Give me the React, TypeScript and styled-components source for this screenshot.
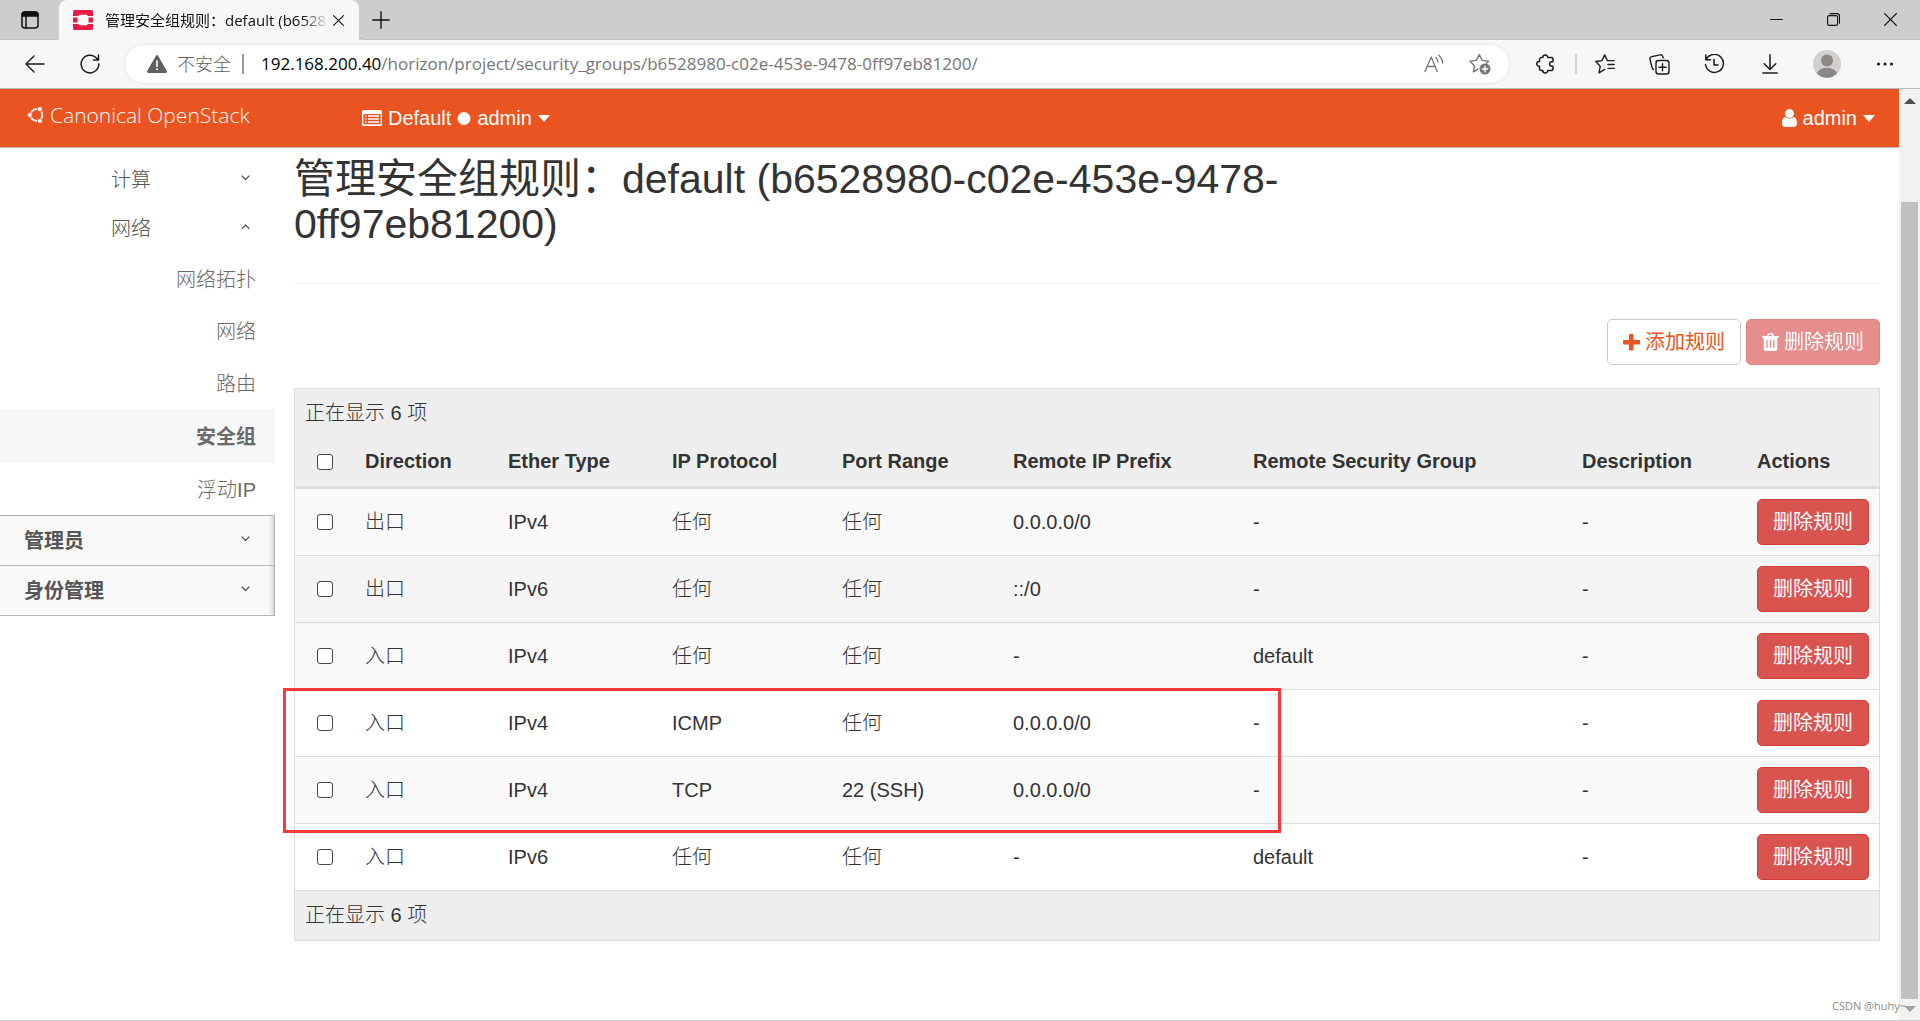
import React from "react";
import styled, { createGlobalStyle } from "styled-components";

const UI_FONT = '"Open Sans", "Noto Sans", "Noto Sans CJK SC", sans-serif';
const PAGE_FONT = '"Liberation Sans", Arial, "Noto Sans CJK SC", sans-serif';

const GlobalStyle = createGlobalStyle`
  *, *::before, *::after { box-sizing: border-box; }
  body { margin: 0; background: #fff; color: #333; font-family: ${PAGE_FONT}; }
  button { font: inherit; color: inherit; background: none; border: 0; padding: 0; margin: 0; cursor: pointer; }
  a { color: inherit; text-decoration: none; }
  ul { list-style: none; margin: 0; padding: 0; }
  svg { display: block; flex: none; }
`;

/* ---------- browser frame ---------- */

const Browser = styled.div`
  display: flex;
  flex-direction: column;
  min-height: 100vh;
  border-bottom: 1px solid #ccc8d0;
`;

const TabStrip = styled.div`
  display: flex;
  height: 40px;
  background: #cdcdcd;
  font-family: ${UI_FONT};
  color: #111;
`;

const TabMenuButton = styled.button`
  display: flex;
  align-items: center;
  justify-content: center;
  width: 59px;
  border-bottom: 1px solid #bfbfbf;
  border-bottom-right-radius: 6px;
`;

const Tab = styled.div`
  display: flex;
  align-items: center;
  width: 300px;
  padding: 0 15px 0 14px;
  background: #f7f7f7;
  border-radius: 8px 8px 0 0;
`;

const TabTitle = styled.span`
  flex: 1;
  min-width: 0;
  margin: 0 4px 0 12px;
  white-space: nowrap;
  font-size: 15px;
  line-height: 24px;
  mask-image: linear-gradient(to right, #000 88%, transparent);
`;

const StripRest = styled.div`
  display: flex;
  flex: 1;
  justify-content: space-between;
  border-bottom: 1px solid #bfbfbf;
  border-bottom-left-radius: 6px;
`;

const StripButton = styled.button`
  display: flex;
  align-items: center;
  justify-content: center;
  width: 43px;
`;

const WindowControls = styled.div`
  display: flex;
  padding-right: 1px;
`;

const WindowButton = styled.button`
  display: flex;
  align-items: center;
  justify-content: center;
  width: 57px;
`;

const Toolbar = styled.div`
  display: flex;
  align-items: center;
  height: 49px;
  padding: 0 8px 0 7px;
  background: #f7f7f7;
  border-bottom: 1px solid #b9b9b9;
  font-family: ${UI_FONT};
`;

const ToolButton = styled.button<{ $wide?: boolean }>`
  display: flex;
  align-items: center;
  justify-content: center;
  width: ${(p) => (p.$wide ? 60 : 55)}px;
  height: 40px;
  color: #1b1b1b;
`;

const AddressBar = styled.div`
  display: flex;
  flex: 1;
  align-items: center;
  min-width: 0;
  height: 38px;
  margin: 0 6px 0 8px;
  padding: 0 18px 0 22px;
  background: #fff;
  border-radius: 19px;
  box-shadow: 0 0 3px rgba(0, 0, 0, 0.12);
  color: #767676;
`;

const Insecure = styled.span`
  margin-left: 10px;
  font-size: 18px;
  line-height: 24px;
  font-weight: 300;
  color: #5f5f5f;
`;

const Divider = styled.span<{ $light?: boolean }>`
  width: 2px;
  height: 20px;
  background: ${(p) => (p.$light ? "#d0d0d0" : "#9a9a9a")};
`;

const Url = styled.div`
  flex: 1;
  min-width: 0;
  overflow: hidden;
  white-space: nowrap;
  font-size: 17px;
  line-height: 24px;
  b { font-weight: 400; color: #000; }
`;

const AddressTools = styled.div`
  display: flex;
  gap: 25px;
`;

const Spacer = styled.span<{ $w: number }>`
  width: ${(p) => p.$w}px;
`;

/* ---------- viewport ---------- */

const Viewport = styled.div`
  display: flex;
  flex: 1;
`;

const Page = styled.div`
  flex: 1;
  min-width: 0;
`;

const ScrollTrack = styled.div`
  display: flex;
  flex-direction: column;
  align-items: center;
  justify-content: space-between;
  width: 21px;
  padding: 9px 0 8px;
  background: #f1f1f1;
`;

const ScrollThumb = styled.div`
  flex: 1;
  width: 17px;
  margin: 98px 0 7px;
  background: #c1c1c1;
`;

const ScrollArrow = styled.span<{ $down?: boolean }>`
  border: 6px solid transparent;
  ${(p) =>
    p.$down
      ? "border-top-color: #a0a0a0; border-bottom-width: 0;"
      : "border-bottom-color: #505050; border-top-width: 0;"}
`;

const TopNav = styled.header`
  display: flex;
  align-items: center;
  height: 59px;
  padding: 0 24px 0 27px;
  background: #e95420;
  border-bottom: 1px solid #c9bdb8;
  color: #fff;
  font-size: 20px;
  line-height: 28px;
`;

const Brand = styled.a`
  display: flex;
  align-items: center;
  gap: 5px;
  width: 335px;
  padding-bottom: 6px;
  font-family: "Open Sans", sans-serif;
  font-weight: 300;
  font-size: 21px;
`;

const NavMenu = styled.button`
  display: flex;
  align-items: center;
  gap: 6px;
`;

const NavGap = styled.div`
  flex: 1;
`;

const Caret = styled.span`
  border: 6px solid transparent;
  border-top: 7px solid #fff;
  border-bottom-width: 0;
`;

const Columns = styled.div`
  display: flex;
  align-items: flex-start;
`;

/* ---------- sidebar ---------- */

const Sidebar = styled.nav`
  width: 275px;
  padding-top: 7px;
  font-size: 20px;
  line-height: 28px;
`;

const GroupButton = styled.button`
  display: flex;
  align-items: center;
  justify-content: space-between;
  width: 100%;
  height: 49px;
  padding: 0 25px 0 111px;
  font-weight: 300;
  color: #555;
`;

const SubLink = styled.a<{ $active?: boolean }>`
  display: flex;
  align-items: center;
  justify-content: flex-end;
  height: ${(p) => (p.$active ? 54 : 52)}px;
  padding: 2px 19px 0 0;
  color: #6a6a6a;
  background: ${(p) => (p.$active ? "#f7f7f7" : "transparent")};
  font-weight: ${(p) => (p.$active ? 700 : 300)};
`;

const Panels = styled.div`
  border-bottom: 1px solid #b5b5b5;
`;

const PanelButton = styled.button`
  display: flex;
  align-items: center;
  justify-content: space-between;
  width: 100%;
  height: 50px;
  padding: 0 24px;
  background: #f9f9f9;
  border-top: 1px solid #b5b5b5;
  border-right: 1px solid #b5b5b5;
  box-shadow: inset -6px 0 5px -4px rgba(0, 0, 0, 0.16);
  font-weight: 700;
  color: #555;
`;

/* ---------- main content ---------- */

const Main = styled.main`
  flex: 1;
  min-width: 0;
  padding: 9px 19px 40px;
`;

const Heading = styled.h1`
  max-width: 70%;
  margin: 0;
  font-size: 41px;
  line-height: 45px;
  font-weight: 400;
`;

const Rule = styled.hr`
  height: 1px;
  margin: 36px 0 35px;
  border: 0;
  background: #eee;
`;

const Actions = styled.div`
  display: flex;
  justify-content: flex-end;
  gap: 5px;
  margin-bottom: 23px;
`;

const Button = styled.button<{ $kind: "plain" | "danger" }>`
  display: inline-flex;
  align-items: center;
  gap: 5px;
  height: 46px;
  padding: 0 15px;
  border: 1px solid ${(p) => (p.$kind === "danger" ? "#d43f3a" : "#ccc")};
  border-radius: 5px;
  background: ${(p) => (p.$kind === "danger" ? "#d9534f" : "#fff")};
  color: ${(p) => (p.$kind === "danger" ? "#fff" : "#e95420")};
  font-size: 20px;
  line-height: 28px;
  font-weight: 400;
  white-space: nowrap;
  vertical-align: middle;
  &:disabled { opacity: 0.65; cursor: default; }
`;

const TableArea = styled.div`
  position: relative;
`;

const RuleTable = styled.table`
  width: 100%;
  table-layout: fixed;
  border: 1px solid #ddd;
  border-spacing: 0;
  font-size: 20px;
  line-height: 29px;
  font-weight: 300;
  text-align: left;
`;

const SummaryCell = styled.td`
  padding: 10px;
  background: #eee;
  tfoot & { border-top: 1px solid #ddd; }
`;

const HeadCell = styled.th<{ $center?: boolean }>`
  padding: 9px 10px 10px;
  background: #eee;
  border-bottom: 3px solid #ddd;
  font-weight: 700;
  white-space: nowrap;
  text-align: ${(p) => (p.$center ? "center" : "left")};
`;

const Row = styled.tr<{ $bg: string }>`
  background: ${(p) => p.$bg};
`;

const Cell = styled.td<{ $center?: boolean }>`
  padding: 10px;
  border-top: 1px solid #ddd;
  white-space: nowrap;
  vertical-align: middle;
  text-align: ${(p) => (p.$center ? "center" : "left")};
  ${Row}:first-child & { border-top: 0; }
`;

const Check = styled.input`
  appearance: none;
  display: block;
  width: 16px;
  height: 16px;
  margin: 0 auto;
  border: 1px solid #444;
  border-radius: 3px;
  background: #fff;
`;

const Highlight = styled.div`
  position: absolute;
  left: -11px;
  top: 300px;
  width: 62.9%;
  height: 145px;
  border: 3px solid #fd3838;
  pointer-events: none;
`;

const Watermark = styled.span`
  position: absolute;
  right: 14px;
  bottom: 7px;
  font-family: "Open Sans", sans-serif;
  font-size: 11px;
  line-height: 16px;
  color: #8c8c8c;
`;

/* ---------- icons ---------- */

const line = { fill: "none", stroke: "currentColor", strokeLinecap: "round", strokeLinejoin: "round" } as const;

const TabsIcon = () => (
  <svg width="18" height="18" viewBox="0 0 18 18" {...line} strokeWidth="1.5">
    <rect x="1" y="1" width="16" height="16" rx="3" />
    <path d="M1 5V4a3 3 0 0 1 3-3h10a3 3 0 0 1 3 3v1z" fill="currentColor" />
    <path d="M5 5v12" />
  </svg>
);
const StackLogo = () => (
  <svg width="20" height="20" viewBox="0 0 20 20">
    <path d="M1.5 0h17A1.5 1.5 0 0 1 20 1.5V6h-5.5V5.500a.8.8 0 0 0-.8-.8H6.300a.8.8 0 0 0-.8.8V6H0V1.500A1.500 1.500 0 0 1 1.500 0z" fill="#ed1944" />
    <path d="M0 7.500h4.500v5H0zM15.500 7.500H20v5h-4.500z" fill="#ed1944" />
    <path d="M1.500 20h17a1.500 1.500 0 0 0 1.500-1.500V14h-5.500v.5a.8.8 0 0 1-.8.8H6.300a.8.8 0 0 1-.8-.8V14H0v4.500A1.500 1.500 0 0 0 1.500 20z" fill="#ed1944" />
  </svg>
);
const CloseIcon = ({ size = 11 }: { size?: number }) => (
  <svg width={size} height={size} viewBox="0 0 12 12" {...line} strokeWidth="1.2"><path d="M.6.6l10.800 10.800M11.400.6L.6 11.400" /></svg>
);
const NewTabIcon = () => (
  <svg width="18" height="18" viewBox="0 0 18 18" {...line} strokeWidth="1.4"><path d="M9 .8v16.400M.8 9h16.400" /></svg>
);
const MinimizeIcon = () => (
  <svg width="13" height="13" viewBox="0 0 13 13" {...line} strokeWidth="1"><path d="M.5 6.500h12" /></svg>
);
const RestoreIcon = () => (
  <svg width="13" height="13" viewBox="0 0 13 13" {...line} strokeWidth="1.1">
    <rect x=".6" y="2.600" width="10" height="9.800" rx="1.500" />
    <path d="M3 .6h7a2.500 2.500 0 0 1 2.500 2.500v7" />
  </svg>
);
const BackIcon = () => (
  <svg width="20" height="18" viewBox="0 0 20 18" {...line} strokeWidth="1.4"><path d="M19.200 9H1M9 1L1 9l8 8" /></svg>
);
const RefreshIcon = () => (
  <svg width="20" height="20" viewBox="0 0 20 20" {...line} strokeWidth="1.5"><path d="M18.800 10a8.800 8.800 0 1 1-2.600-6.200L18.500 6M18.500 1v5h-5" /></svg>
);
const WarningIcon = () => (
  <svg width="20" height="18" viewBox="0 0 20 18">
    <path d="M8.900.7a1.300 1.300 0 0 1 2.200 0l8.700 15.400A1.300 1.300 0 0 1 18.700 18H1.300a1.300 1.300 0 0 1-1.100-1.900z" fill="#5f5f5f" />
    <path d="M10 6v5.500" stroke="#fff" strokeWidth="1.600" strokeLinecap="round" />
    <circle cx="10" cy="14.300" r="1" fill="#fff" />
  </svg>
);
const ReadAloudIcon = () => (
  <svg width="20" height="20" viewBox="0 0 20 20" {...line} strokeWidth="1.3">
    <path d="M1 17.500L7.200 3l6 14.500M3.300 12.500h7.800M12 3.500c1.200 1.200 1.700 2.500 1.800 4.200M14.600 1.200c2.500 2 3.900 4.600 4 8" />
  </svg>
);
const AddStarIcon = () => (
  <svg width="22" height="22" viewBox="0 0 22 22" {...line} strokeWidth="1.4">
    <path d="M9 16.200l-4.600 2.700 1.100-6.200L1 8.300l6.300-.9L10.300 1.500l2.900 5.900 6.300.9-2 1.900" />
    <circle cx="16" cy="16" r="5.500" fill="currentColor" stroke="none" />
    <path d="M16 13.300v5.400M13.300 16h5.400" stroke="#fff" />
  </svg>
);
const PuzzleIcon = () => (
  <svg width="18" height="20" viewBox="0 0 18 20" {...line} strokeWidth="1.5">
    <path d="M6.800 3.600a2.500 2.500 0 0 1 5 0H15a2 2 0 0 1 2 2v2.200h-1.200a2.200 2.200 0 0 0 0 4.400H17v2.200a2 2 0 0 1-2 2h-3.200a2.500 2.500 0 0 1-5 0H5.500a2 2 0 0 1-2-2v-2.200h-.4a2.400 2.400 0 0 1 0-4.800h.4V5.600a2 2 0 0 1 2-2z" />
  </svg>
);
const FavoritesIcon = () => (
  <svg width="20" height="20" viewBox="0 0 20 20" {...line} strokeWidth="1.4">
    <path d="M9.700 15.400L4 18.800l1.200-6.500L.8 7.500l6.200-.9L9.700.9l2.700 5.700h6.800M13 10.500h6.200M13 14.400h6.200" />
  </svg>
);
const CollectionsIcon = () => (
  <svg width="21" height="21" viewBox="0 0 21 21" {...line} strokeWidth="1.4">
    <rect x="7" y="6.500" width="13" height="13.500" rx="2.500" />
    <path d="M13.500 9.800v7M10 13.300h7M4.500 15.500c-.8-.4-1.200-1-1.400-1.900L1 5.500c-.4-1.500.3-2.500 1.700-2.900L11 .9c1.500-.3 2.500.3 2.900 1.700l.3 1.200" />
  </svg>
);
const HistoryIcon = () => (
  <svg width="21" height="20" viewBox="0 0 21 20" {...line} strokeWidth="1.5">
    <path d="M2.300 5.500a9 9 0 1 1-.8 5M1.800 1v4.800h4.800M10 5.500v5.500h4" />
  </svg>
);
const DownloadIcon = () => (
  <svg width="16" height="20" viewBox="0 0 16 20" {...line} strokeWidth="1.5"><path d="M8 .8V15M2.200 9.800L8 15.500l5.800-5.700M.8 19h14.400" /></svg>
);
const AvatarIcon = () => (
  <svg width="28" height="28" viewBox="0 0 28 28">
    <circle cx="14" cy="14" r="14" fill="#d2d0ce" />
    <circle cx="14" cy="10.500" r="6" fill="#8a8785" />
    <path d="M4 23.500c1.500-4 5-5.500 10-5.500s8.500 1.500 10 5.500a14 14 0 0 1-20 0z" fill="#8a8785" />
  </svg>
);
const MoreIcon = () => (
  <svg width="18" height="4" viewBox="0 0 18 4" fill="currentColor"><circle cx="2.500" cy="2" r="1.600" /><circle cx="9" cy="2" r="1.600" /><circle cx="15.500" cy="2" r="1.600" /></svg>
);
const UbuntuIcon = () => (
  <svg width="18" height="18" viewBox="0 0 18 18">
    <circle cx="9.500" cy="9" r="5.900" fill="none" stroke="#fff" strokeWidth="1.900" />
    <g fill="#fff" stroke="#e95420" strokeWidth=".9">
      <circle cx="2.700" cy="9" r="2.500" />
      <circle cx="12.900" cy="3.100" r="2.500" />
      <circle cx="12.900" cy="14.900" r="2.500" />
    </g>
  </svg>
);
const ListIcon = () => (
  <svg width="20" height="16" viewBox="0 0 20 16">
    <path fillRule="evenodd" fill="#fff" d="M1.500 0h17A1.500 1.500 0 0 1 20 1.500v13a1.500 1.500 0 0 1-1.500 1.500h-17A1.500 1.500 0 0 1 0 14.500v-13A1.500 1.500 0 0 1 1.500 0zM1.400 4v10.200h17.200V4z" />
    <path d="M3 6h1.500M3 9h1.500M3 12h1.500M6 6h11M6 9h11M6 12h11" stroke="#fff" strokeWidth="1.400" />
  </svg>
);
const DotIcon = () => (
  <svg width="14" height="14" viewBox="0 0 14 14"><circle cx="7" cy="7.500" r="6.500" fill="#fff" /></svg>
);
const UserIcon = () => (
  <svg width="15" height="18" viewBox="0 0 15 18" fill="#fff">
    <circle cx="7.500" cy="4.600" r="4.500" />
    <path d="M3.400 8a5.900 5.900 0 0 0 8.200 0c2.400.3 3.400 3 3.400 6.300 0 2.200-1.300 3.700-3.200 3.700H3.200C1.300 18 0 16.500 0 14.300 0 11 1 8.300 3.400 8z" />
  </svg>
);
const PlusIcon = () => (
  <svg width="17" height="17" viewBox="0 0 17 17" fill="currentColor">
    <path d="M6 1a1 1 0 0 1 1-1h2.500a1 1 0 0 1 1 1v5H16a1 1 0 0 1 1 1v2.500a1 1 0 0 1-1 1h-5.500v5a1 1 0 0 1-1 1H7a1 1 0 0 1-1-1v-5H1a1 1 0 0 1-1-1V7a1 1 0 0 1 1-1h5z" />
  </svg>
);
const TrashIcon = () => (
  <svg width="17" height="18" viewBox="0 0 17 18" fill="currentColor">
    <path fillRule="evenodd" d="M5 3l.8-2.100A1.400 1.400 0 0 1 7 0h3a1.400 1.400 0 0 1 1.200.9L12 3h4.500a.5.5 0 0 1 .5.500v.8a.5.5 0 0 1-.5.500H15.300V16a2 2 0 0 1-1.900 2H3.600a2 2 0 0 1-1.900-2V4.800H.5a.5.5 0 0 1-.5-.5v-.8A.5.500 0 0 1 .5 3zM6.700 3h3.600l-.6-1.500H7.300zM4.500 7v8h1.200V7zM7.900 7v8h1.200V7zM11.300 7v8h1.200V7z" />
  </svg>
);
const Chevron = ({ up }: { up?: boolean }) => (
  <svg width="9" height="12" viewBox="0 0 9 12" {...line} strokeWidth="1.2"><path d={up ? "M1 5.500L4.500 2 8 5.500" : "M1 2l3.500 3.500L8 2"} /></svg>
);

/* ---------- data ---------- */

const COLUMNS: { title: string; width: number }[] = [
  { title: "Direction", width: 143 },
  { title: "Ether Type", width: 164 },
  { title: "IP Protocol", width: 170 },
  { title: "Port Range", width: 171 },
  { title: "Remote IP Prefix", width: 240 },
  { title: "Remote Security Group", width: 329 },
  { title: "Description", width: 175 },
  { title: "Actions", width: 132 },
];

const RULES: { bg: string; cells: string[] }[] = [
  { bg: "#f9f9f9", cells: ["出口", "IPv4", "任何", "任何", "0.0.0.0/0", "-", "-"] },
  { bg: "#f5f5f5", cells: ["出口", "IPv6", "任何", "任何", "::/0", "-", "-"] },
  { bg: "#f9f9f9", cells: ["入口", "IPv4", "任何", "任何", "-", "default", "-"] },
  { bg: "#ffffff", cells: ["入口", "IPv4", "ICMP", "任何", "0.0.0.0/0", "-", "-"] },
  { bg: "#f9f9f9", cells: ["入口", "IPv4", "TCP", "22 (SSH)", "0.0.0.0/0", "-", "-"] },
  { bg: "#ffffff", cells: ["入口", "IPv6", "任何", "任何", "-", "default", "-"] },
];

const SUB_LINKS = ["网络拓扑", "网络", "路由", "安全组", "浮动IP"];

export default function App() {
  return (
    <Browser>
      <GlobalStyle />
      <TabStrip>
        <TabMenuButton aria-label="Tab actions"><TabsIcon /></TabMenuButton>
        <Tab>
          <StackLogo />
          <TabTitle>管理安全组规则：default (b6528</TabTitle>
          <button aria-label="Close tab"><CloseIcon /></button>
        </Tab>
        <StripRest>
          <StripButton aria-label="New tab"><NewTabIcon /></StripButton>
          <WindowControls>
            <WindowButton aria-label="Minimize"><MinimizeIcon /></WindowButton>
            <WindowButton aria-label="Restore"><RestoreIcon /></WindowButton>
            <WindowButton aria-label="Close"><CloseIcon size={13} /></WindowButton>
          </WindowControls>
        </StripRest>
      </TabStrip>
      <Toolbar>
        <ToolButton aria-label="Back"><BackIcon /></ToolButton>
        <ToolButton aria-label="Refresh"><RefreshIcon /></ToolButton>
        <AddressBar>
          <WarningIcon />
          <Insecure>不安全</Insecure>
          <Spacer $w={11} />
          <Divider />
          <Spacer $w={17} />
          <Url role="textbox" aria-label="Address">
            <b>192.168.200.40</b>/horizon/project/security_groups/b6528980-c02e-453e-9478-0ff97eb81200/
          </Url>
          <AddressTools>
            <button aria-label="Read aloud"><ReadAloudIcon /></button>
            <button aria-label="Add to favorites"><AddStarIcon /></button>
          </AddressTools>
        </AddressBar>
        <ToolButton $wide aria-label="Extensions"><PuzzleIcon /></ToolButton>
        <Divider $light />
        <ToolButton aria-label="Favorites"><FavoritesIcon /></ToolButton>
        <ToolButton aria-label="Collections"><CollectionsIcon /></ToolButton>
        <ToolButton aria-label="History"><HistoryIcon /></ToolButton>
        <ToolButton aria-label="Downloads"><DownloadIcon /></ToolButton>
        <ToolButton $wide aria-label="Profile"><AvatarIcon /></ToolButton>
        <ToolButton aria-label="More"><MoreIcon /></ToolButton>
      </Toolbar>

      <Viewport>
        <Page>
          <TopNav>
            <Brand href="#"><UbuntuIcon />Canonical OpenStack</Brand>
            <NavMenu><ListIcon />Default<DotIcon />admin<Caret /></NavMenu>
            <NavGap />
            <NavMenu><UserIcon />admin<Caret /></NavMenu>
          </TopNav>
          <Columns>
            <Sidebar>
              <GroupButton>计算<Chevron /></GroupButton>
              <GroupButton>网络<Chevron up /></GroupButton>
              <ul>
                {SUB_LINKS.map((name) => (
                  <li key={name}><SubLink href="#" $active={name === "安全组"}>{name}</SubLink></li>
                ))}
              </ul>
              <Panels>
                <PanelButton>管理员<Chevron /></PanelButton>
                <PanelButton>身份管理<Chevron /></PanelButton>
              </Panels>
            </Sidebar>
            <Main>
              <Heading>管理安全组规则：default (b6528980-c02e-453e-9478-0ff97eb81200)</Heading>
              <Rule />
              <Actions>
                <Button $kind="plain"><PlusIcon />添加规则</Button>
                <Button $kind="danger" disabled><TrashIcon />删除规则</Button>
              </Actions>
              <TableArea>
                <RuleTable>
                  <colgroup>
                    <col width={60} />
                    {COLUMNS.map((c) => <col key={c.title} width={c.width} />)}
                  </colgroup>
                  <thead>
                    <tr><SummaryCell colSpan={9}>正在显示 6 项</SummaryCell></tr>
                    <tr>
                      <HeadCell $center><Check type="checkbox" aria-label="Select all" /></HeadCell>
                      {COLUMNS.map((c) => <HeadCell key={c.title}>{c.title}</HeadCell>)}
                    </tr>
                  </thead>
                  <tbody>
                    {RULES.map((rule, i) => (
                      <Row key={i} $bg={rule.bg}>
                        <Cell $center><Check type="checkbox" aria-label={`Select rule ${i + 1}`} /></Cell>
                        {rule.cells.map((text, j) => <Cell key={j}>{text}</Cell>)}
                        <Cell><Button $kind="danger">删除规则</Button></Cell>
                      </Row>
                    ))}
                  </tbody>
                  <tfoot>
                    <tr><SummaryCell colSpan={9}>正在显示 6 项</SummaryCell></tr>
                  </tfoot>
                </RuleTable>
                <Highlight />
              </TableArea>
            </Main>
          </Columns>
        </Page>
        <ScrollTrack>
          <ScrollArrow />
          <ScrollThumb />
          <ScrollArrow $down />
        </ScrollTrack>
      </Viewport>
      <Watermark>CSDN @huhy~</Watermark>
    </Browser>
  );
}
